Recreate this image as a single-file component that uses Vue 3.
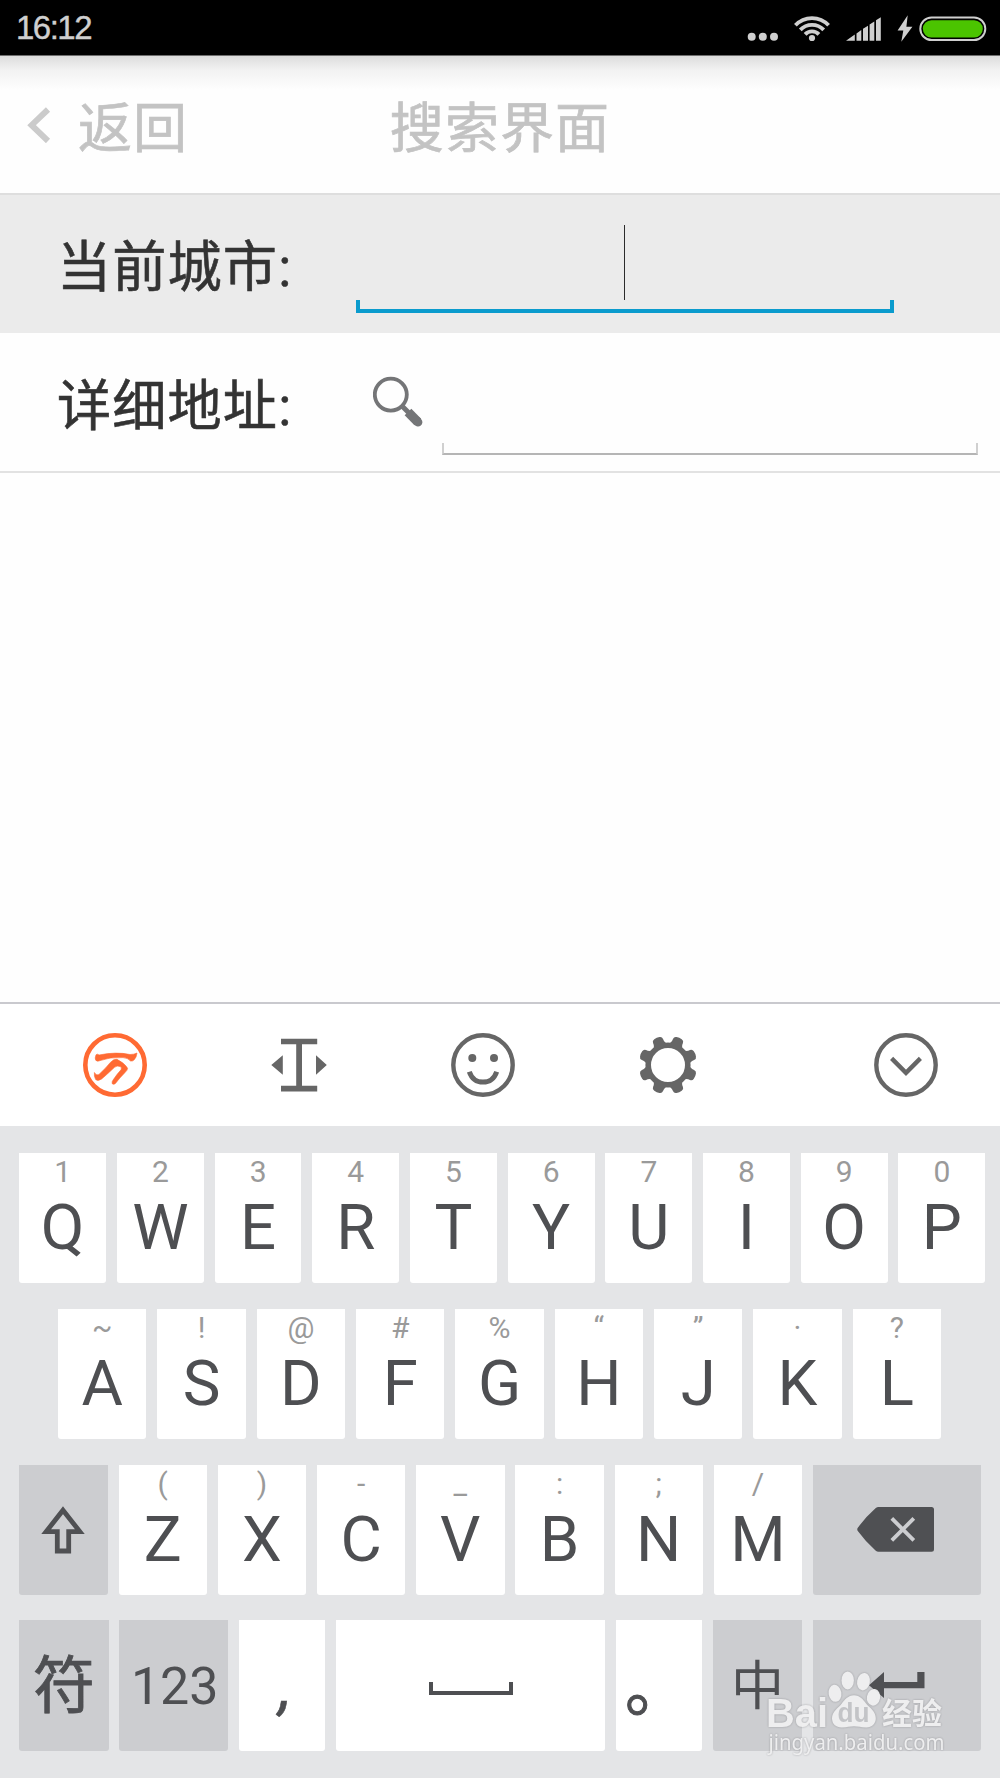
<script setup>
import { ref } from "vue";

const numberRow = [
  { hint: "1", label: "Q" },
  { hint: "2", label: "W" },
  { hint: "3", label: "E" },
  { hint: "4", label: "R" },
  { hint: "5", label: "T" },
  { hint: "6", label: "Y" },
  { hint: "7", label: "U" },
  { hint: "8", label: "I" },
  { hint: "9", label: "O" },
  { hint: "0", label: "P" },
];

const homeRow = [
  { hint: "~", label: "A" },
  { hint: "!", label: "S" },
  { hint: "@", label: "D" },
  { hint: "#", label: "F" },
  { hint: "%", label: "G" },
  { hint: "“", label: "H" },
  { hint: "”", label: "J" },
  { hint: "·", label: "K" },
  { hint: "?", label: "L" },
];

const bottomRow = [
  { hint: "(", label: "Z" },
  { hint: ")", label: "X" },
  { hint: "-", label: "C" },
  { hint: "_", label: "V" },
  { hint: ":", label: "B" },
  { hint: ";", label: "N" },
  { hint: "/", label: "M" },
];

const gearTeeth = Array.from({ length: 8 }, (_, i) => 22.5 + i * 45);

const focused = ref("city");
</script>

<template>
  <div class="screen">
    <div class="status">
      <span class="status__time">16:12</span>
      <svg class="status__icons" viewBox="745 10 245 34" width="245" height="34">
        <g fill="#cfcfcf">
          <circle cx="751.7" cy="35.8" r="4" />
          <circle cx="762.8" cy="35.8" r="4" />
          <circle cx="774" cy="35.8" r="4" />
          <circle cx="812" cy="37" r="3.1" />
          <path d="M846 39.7L854.8 33.6V39.7zM856.5 32.4L861.3 28.9V39.7H856.5zM863 27.8L868 24.7V39.7H863zM869.6 23.5L874.3 20.4V39.7H869.6zM876 19.2L880.8 16.2V39.7H876z" />
          <path d="M907.7 14.3L897.6 29.4H903.3L901.3 40.8L912.4 25.7H906.4z" />
        </g>
        <g fill="none" stroke="#cfcfcf" stroke-width="3.8">
          <path d="M805.1 33.4A9.4 9.4 0 0 1 818.9 33.4" />
          <path d="M800.3 28.9A16 16 0 0 1 823.7 28.9" />
          <path d="M795.4 24.3A22.6 22.6 0 0 1 828.6 24.3" />
        </g>
        <rect x="920.3" y="16.5" width="65" height="22.6" rx="11.3" fill="none" stroke="#cfcfcf" stroke-width="2" />
        <rect x="922.8" y="19.2" width="60" height="17.2" rx="8.6" fill="#4bc400" />
      </svg>
    </div>

    <header class="header">
      <button type="button" class="header__back">
        <svg class="header__arrow" viewBox="0 0 24 36" width="24" height="36">
          <path d="M21 2.5L4.6 18.2L21 34" fill="none" stroke="#cbcbcb" stroke-width="6" />
        </svg>
        <span>返回</span>
      </button>
      <h1 class="header__title">搜索界面</h1>
    </header>

    <main class="form">
      <div class="row" :class="{ 'row--active': focused === 'city' }" @click="focused = 'city'">
        <span class="row__label">当前城市:</span>
        <div class="field field--city">
          <div class="field__text"><span v-if="focused === 'city'" class="caret"></span></div>
          <div class="field__rule"></div>
        </div>
      </div>
      <div class="row" :class="{ 'row--active': focused === 'address' }" @click="focused = 'address'">
        <span class="row__label">详细地址:</span>
        <svg class="row__search" viewBox="0 0 52 52" width="52" height="52">
          <g fill="none" stroke="#747577">
            <circle cx="17.8" cy="18.6" r="16" stroke-width="3.8" />
            <path d="M28.5 29.5L36 37" stroke-width="5" />
            <path d="M35 36L44.8 46" stroke-width="9.4" />
            <path d="M44 45L45 46.2" stroke-width="8.8" stroke-linecap="round" />
          </g>
        </svg>
        <div class="field field--address">
          <div class="field__text"><span v-if="focused === 'address'" class="caret"></span></div>
          <div class="field__rule"></div>
        </div>
      </div>
    </main>

    <section class="ime">
      <div class="tools">
        <span class="tool">
          <svg viewBox="0 0 64 64" width="64" height="64">
            <circle cx="32" cy="32" r="29.7" fill="none" stroke="#ff6a33" stroke-width="4.6" />
            <g fill="#ff6a33" stroke="#ff6a33" stroke-width="0.6">
              <path d="M13 21.8Q14.5 20.5 16 22Q33 18.5 47 21.5Q51 21.5 54 20Q53.5 24.5 51.2 26.8Q49.5 28.5 47.5 28Q45 25 40 24.6Q27 23.6 14.8 28.2Q12.3 28.2 12.2 25Z" />
              <path d="M11.4 39.5Q13 43 16 41.4Q23 35 27.4 29.4Q31 25.5 34 26.3Q41.5 30 44.6 35.2Q44.4 37.5 42 39.5Q36.5 45 32.4 50.5Q31 52 29.2 50.7Q28.6 48.8 30.2 46.8Q34 41 38 36.8Q39.3 34.6 37 33.5Q34.3 32.3 31.5 34.3Q24 41.5 18.6 46Q15 48.6 12.7 46.6Q10.8 43.5 11.4 39.5Z" />
            </g>
          </svg>
        </span>
        <span class="tool">
          <svg viewBox="0 0 64 64" width="64" height="64" fill="#666">
            <path d="M14 5.7H50.2V11.2H35V52.8H50.2V58.4H14V52.8H29.2V11.2H14Z" />
            <path d="M4.3 32L15.8 22.2V41.8ZM59.8 32L49 22.2V41.8Z" />
          </svg>
        </span>
        <span class="tool">
          <svg viewBox="0 0 64 64" width="64" height="64">
            <circle cx="32" cy="32" r="29.7" fill="none" stroke="#666" stroke-width="4.4" />
            <circle cx="21.3" cy="25" r="4" fill="#666" />
            <circle cx="43" cy="25" r="4" fill="#666" />
            <path d="M18.3 38.7C20.8 46 26 49.1 32 49.1S43.2 46 45.7 38.7" fill="none" stroke="#666" stroke-width="5" />
          </svg>
        </span>
        <span class="tool">
          <svg viewBox="0 0 64 64" width="64" height="64">
            <circle cx="32" cy="32" r="19.8" fill="none" stroke="#666" stroke-width="5.6" />
            <path
              v-for="angle in gearTeeth"
              :key="angle"
              d="M22.5 13.5Q27 10.5 26.6 6Q26.6 3.4 29.2 2.9Q32 2.2 34.8 2.9Q37.4 3.4 37.4 6Q37 10.5 41.5 13.5Z"
              fill="#666"
              :transform="`rotate(${angle} 32 32)`"
            />
          </svg>
        </span>
        <span class="tool tool--hide">
          <svg viewBox="0 0 64 64" width="64" height="64" fill="none" stroke="#666" stroke-width="4.4">
            <circle cx="32" cy="32" r="29.7" />
            <path d="M17.6 25.4L32 39.9L46.4 25.4" />
          </svg>
        </span>
      </div>

      <div class="keys">
        <div class="keys__row keys__row--numbers">
          <button v-for="key in numberRow" :key="key.label" type="button" class="key">
            <span class="key__hint">{{ key.hint }}</span>
            <span class="key__label">{{ key.label }}</span>
          </button>
        </div>

        <div class="keys__row keys__row--home">
          <button v-for="key in homeRow" :key="key.label" type="button" class="key">
            <span class="key__hint">{{ key.hint }}</span>
            <span class="key__label">{{ key.label }}</span>
          </button>
        </div>

        <div class="keys__row">
          <button type="button" class="key key--dark key--icon">
            <svg viewBox="0 0 48 48" width="48" height="48">
              <path d="M24 4.2L40.8 25.6H29.7V45H18.3V25.6H7.2Z" fill="none" stroke="#4f5053" stroke-width="4.8" />
            </svg>
          </button>
          <button v-for="key in bottomRow" :key="key.label" type="button" class="key">
            <span class="key__hint">{{ key.hint }}</span>
            <span class="key__label">{{ key.label }}</span>
          </button>
          <button type="button" class="key key--dark key--icon key--wide">
            <svg class="key__delete" viewBox="0 0 77 45" width="77" height="45">
              <path d="M18.5 1.2Q20 0 21.5 0H74.5Q77 0 77 2.5V42.3Q77 44.8 74.5 44.8H21.5Q20 44.8 18.5 43.4Q8 34 0.8 24Q-0.3 22.4 0.8 20.8Q8 10.5 18.5 1.2Z" fill="#4f5053" />
              <path d="M34.8 11.4L56.8 33.4M56.8 11.4L34.8 33.4" stroke="#cccdd0" stroke-width="3.8" />
            </svg>
          </button>
        </div>

        <div class="keys__row">
          <button type="button" class="key key--dark key--icon key--symbol">符</button>
          <button type="button" class="key key--dark key--icon key--digits">123</button>
          <button type="button" class="key key--icon key--punct key--comma">,</button>
          <button type="button" class="key key--icon key--space"><span class="space-mark"></span></button>
          <button type="button" class="key key--icon key--punct key--stop">。</button>
          <button type="button" class="key key--dark key--icon key--lang">中</button>
          <button type="button" class="key key--dark key--icon key--wide">
            <svg class="key__enter" viewBox="0 0 56 26" width="56" height="26">
              <path d="M0 13.3L15 0V10H48.3V0H55.5V16.3H15V26Z" fill="#4f5053" />
            </svg>
          </button>
        </div>
      </div>
    </section>

    <svg class="watermark" viewBox="760 1665 200 100" width="200" height="100">
      <g fill="#f0f0f1">
        <text class="watermark__brand" x="766" y="1726.5" textLength="62" lengthAdjust="spacingAndGlyphs">Bai</text>
        <ellipse cx="835" cy="1693.3" rx="6.4" ry="8.6" transform="rotate(-8 835 1693.3)" />
        <ellipse cx="847.7" cy="1680.4" rx="6.2" ry="9" />
        <ellipse cx="863.5" cy="1681.7" rx="6.4" ry="8.8" transform="rotate(10 863.5 1681.7)" />
        <ellipse cx="873.5" cy="1697.3" rx="6.6" ry="8.4" transform="rotate(10 873.5 1697.3)" />
        <path d="M854 1695.3C860 1695.3 863.5 1700 866 1703.5C870 1708 875.8 1711.5 875.8 1718.3C875.8 1724 871.5 1727.6 866 1727.4C861 1727.3 858 1726.3 854 1726.3S847 1727.4 842 1727.5C836 1727.6 832 1724.3 832 1718.3C832 1711.5 838.5 1708 841.8 1703.5C844.5 1700 848 1695.3 854 1695.3Z" />
        <text class="watermark__cn" x="882" y="1724" textLength="60" lengthAdjust="spacingAndGlyphs">经验</text>
        <text class="watermark__url" x="768.5" y="1750" textLength="176" lengthAdjust="spacingAndGlyphs">jingyan.baidu.com</text>
      </g>
      <text class="watermark__du" x="837.5" y="1721.5" textLength="32" lengthAdjust="spacingAndGlyphs" fill="#c3c4c7">du</text>
    </svg>
  </div>
</template>

<style>
body {
  background: #fff;
}
</style>

<style scoped>
.screen {
  position: relative;
  width: 1000px;
  height: 1778px;
  display: flex;
  flex-direction: column;
  overflow: hidden;
  background: #fefefe;
  font-family: Roboto, "Noto Sans CJK SC", sans-serif;
}

button {
  margin: 0;
  padding: 0;
  border: 0;
  background: none;
  font: inherit;
  color: inherit;
}

svg {
  display: block;
  flex: none;
}

.status {
  box-sizing: border-box;
  height: 56px;
  flex: none;
  display: flex;
  align-items: center;
  justify-content: space-between;
  padding: 0 10px 0 16px;
  background: #000;
  border-bottom: 1px solid #6e6e6e;
}

.status__time {
  padding-top: 1px;
  font-family: "Liberation Sans", Arial, sans-serif;
  font-size: 33px;
  letter-spacing: -1.5px;
  color: #cfcfcf;
  -webkit-text-stroke: 0.4px #cfcfcf;
}

.header {
  box-sizing: border-box;
  height: 139px;
  flex: none;
  display: grid;
  grid-template-columns: 1fr auto 1fr;
  align-items: center;
  padding-bottom: 1px;
  background: linear-gradient(#dcdcdc, #f2f2f2 14px, #fefefe 34px);
  border-bottom: 2px solid #dedede;
  color: #c3c3c3;
  font-size: 54px;
  letter-spacing: 1.1px;
  -webkit-text-stroke: 0.7px #c3c3c3;
}

.header__back {
  display: flex;
  align-items: center;
  gap: 27px;
  padding-left: 27px;
  letter-spacing: inherit;
}

.header__arrow {
  margin-top: 2px;
}

.header__title {
  margin: 0;
  font-size: inherit;
  font-weight: 400;
}

.form {
  flex: 1;
}

.row {
  box-sizing: border-box;
  height: 138px;
  display: flex;
  align-items: center;
  padding-left: 57px;
  border-bottom: 2px solid #e2e2e2;
  color: #333;
}

.row + .row {
  height: 140px;
}

.row--active {
  background: #ebebeb;
  border-bottom-color: #ebebeb;
}

.row__label {
  width: 299px;
  flex: none;
  margin-top: -1px;
  font-size: 54.2px;
  letter-spacing: 1.1px;
  white-space: nowrap;
  -webkit-text-stroke: 0.6px #333;
}

.row__search {
  margin-left: 17px;
}

.field {
  align-self: stretch;
  display: flex;
  flex-direction: column;
  width: 538px;
}

.field--city {
  padding-top: 30px;
}

.field--address {
  width: 536px;
  margin-left: 17px;
  padding-top: 35px;
}

.field__text {
  height: 75px;
  display: flex;
  justify-content: center;
}

.caret {
  width: 1px;
  margin-right: 1px;
  background: #2b2b2b;
}

.field__rule {
  box-sizing: border-box;
  height: 12px;
  border: 2px solid #b5b5b5;
  border-top: 0;
  border-left-color: #d0d0d0;
  border-right-color: #d0d0d0;
}

.row--active .field__rule {
  height: 13px;
  border-color: #0a9bcd;
  border-width: 0 4px 4px;
}

.ime {
  flex: none;
  border-top: 2px solid #c9c9ce;
  background: #e4e5e7;
}

.tools {
  box-sizing: border-box;
  height: 122px;
  display: flex;
  align-items: center;
  padding-left: 23px;
  background: #fff;
}

.tool {
  width: 184.2px;
  display: flex;
  justify-content: center;
}

.tool--hide {
  width: 64px;
  margin: 0 62.5px 1px auto;
}

.keys {
  box-sizing: border-box;
  height: 652px;
  display: flex;
  flex-direction: column;
  gap: 25.5px;
  padding-top: 27px;
}

.keys__row {
  height: 130.3px;
  display: flex;
  gap: 10.9px;
  padding: 0 19.3px;
  padding-right: 19px;
}

.keys__row--numbers {
  padding-right: 14.7px;
}

.keys__row--home {
  padding: 0 59px 0 58px;
}

.key {
  flex: 1 1 0;
  min-width: 0;
  display: flex;
  flex-direction: column;
  align-items: center;
  background: #fff;
  border-radius: 0 0 3px 3px;
  color: #4e4f52;
}

.key__hint {
  height: 40px;
  font-size: 30px;
  line-height: 38px;
  color: #9a9a9a;
}

.key__label {
  font-size: 63.5px;
  line-height: 70px;
}

.key--dark {
  background: #cccdd0;
}

.key--icon {
  justify-content: center;
}

.key--wide {
  flex: 0 0 168px;
}

.key__delete {
  margin-right: 3px;
}

.key__enter {
  margin-bottom: 2px;
}

.key--symbol {
  flex: 0 0 89.3px;
  padding-top: 3px;
  font-size: 62px;
  line-height: 1;
  -webkit-text-stroke: 0.8px #4e4f52;
}

.key--digits {
  flex: 0 0 108.5px;
  padding: 2px 0 0 2px;
  font-size: 52px;
}

.key--punct {
  flex: 0 0 86.3px;
  box-sizing: border-box;
  font-size: 63px;
}

.key--comma {
  padding: 2px 0 0 7px;
  font-style: italic;
  -webkit-text-stroke: 0.6px #4e4f52;
}

.key--stop {
  padding: 0 5px 6px 0;
  -webkit-text-stroke: 1px #4e4f52;
}

.key--space {
  flex: 1 1 0;
}

.key--lang {
  flex: 0 0 89px;
  padding-bottom: 7px;
  box-sizing: border-box;
  font-size: 53px;
}

.space-mark {
  box-sizing: border-box;
  width: 84px;
  height: 12.5px;
  margin-top: 6px;
  border: 4px solid #4e4f52;
  border-top: 0;
}

.watermark {
  position: absolute;
  left: 760px;
  top: 1665px;
  opacity: 0.95;
  filter: drop-shadow(0 0 1px rgba(90, 90, 95, 0.45));
}

.watermark__brand {
  font: bold 40px "Liberation Sans", Arial, sans-serif;
}

.watermark__du {
  font: bold 27px "Liberation Sans", Arial, sans-serif;
}

.watermark__cn {
  font: bold 30px "Noto Sans CJK SC", sans-serif;
}

.watermark__url {
  font: 21px "Noto Sans", sans-serif;
}
</style>
